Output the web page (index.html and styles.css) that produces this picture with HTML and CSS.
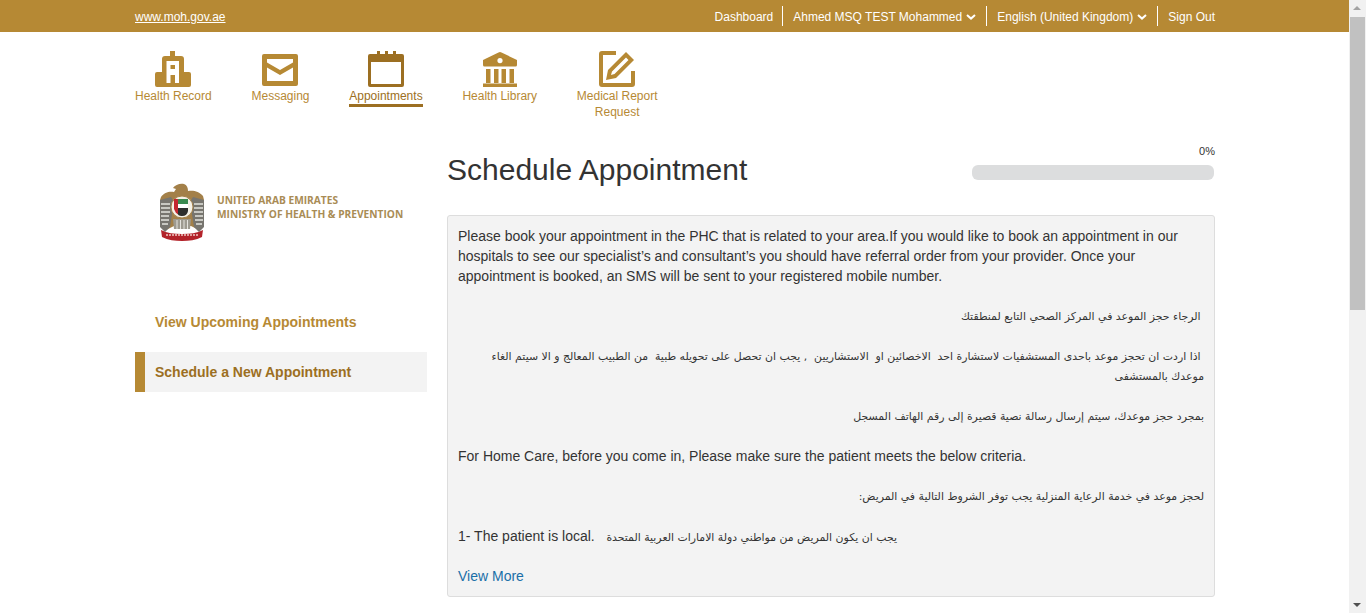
FILE: index.html
```html
<!DOCTYPE html>
<html lang="en">
<head>
<meta charset="utf-8">
<title>Schedule Appointment</title>
<link rel="stylesheet" href="styles.css">
</head>
<body>
<div class="app">
  <div class="page">
    <header class="topbar">
      <div class="wrap topbar-inner">
        <a class="site-link" href="#">www.moh.gov.ae</a>
        <ul class="top-menu">
          <li><a href="#">Dashboard</a></li>
          <li><a href="#">Ahmed MSQ TEST Mohammed<svg class="chev" viewBox="0 0 10 6"><path d="M1 1l4 3.600L9 1" fill="none" stroke="#fff" stroke-width="2"/></svg></a></li>
          <li><a href="#">English (United Kingdom)<svg class="chev" viewBox="0 0 10 6"><path d="M1 1l4 3.600L9 1" fill="none" stroke="#fff" stroke-width="2"/></svg></a></li>
          <li><a href="#">Sign Out</a></li>
        </ul>
      </div>
    </header>

    <nav class="wrap mainnav">
      <a class="nav-item" href="#">
        <svg class="nav-icon" viewBox="0 0 36 36"><path fill-rule="evenodd" fill="#b68934" d="M15 0h5v5h6a3 3 0 0 1 3 3v13h5a2 2 0 0 1 2 2v11a2 2 0 0 1-2 2H2a2 2 0 0 1-2-2V23a2 2 0 0 1 2-2h5V8a3 3 0 0 1 3-3h5zM11.500 10v22H15.500V24h4.500v8h4V10zM15.500 14v4h4.500v-4z"/></svg>
        <span class="nav-label">Health Record</span>
      </a>
      <a class="nav-item" href="#">
        <svg class="nav-icon" viewBox="0 0 36 36"><path fill-rule="evenodd" d="M2 3h32a2 2 0 0 1 2 2v28a2 2 0 0 1-2 2H2a2 2 0 0 1-2-2V5a2 2 0 0 1 2-2zm3 5v3.500l13 7.500 13-7.500V8zm0 8.500V30h26V16.500l-13 7.500z" fill="#b68934"/></svg>
        <span class="nav-label">Messaging</span>
      </a>
      <a class="nav-item active" href="#">
        <svg class="nav-icon" viewBox="0 0 36 36"><path fill-rule="evenodd" d="M9 0h3v3h5V0h3v3h5V0h3v3h6a2 2 0 0 1 2 2v29a2 2 0 0 1-2 2H2a2 2 0 0 1-2-2V5a2 2 0 0 1 2-2h7zM3 11v22h30V11z" fill="#9c6f22"/></svg>
        <span class="nav-label">Appointments</span>
      </a>
      <a class="nav-item" href="#">
        <svg class="nav-icon" viewBox="0 0 36 36"><path fill-rule="evenodd" fill="#b68934" d="M16.500 1.500a3 3 0 0 1 3 0L35 9v5a1.500 1.500 0 0 1-1.500 1.500h-31A1.500 1.500 0 0 1 1 14V9zM18 7a2.600 2.600 0 1 0 0 5.200A2.600 2.600 0 0 0 18 7zM4 18h4.500v14H4zM12 18h4.500v14H12zM19.500 18H24v14h-4.500zM27.500 18H32v14h-4.500zM1 32.500h34V36H1z"/></svg>
        <span class="nav-label">Health Library</span>
      </a>
      <a class="nav-item" href="#">
        <svg class="nav-icon" viewBox="0 0 36 36"><path fill="#b68934" d="M3 0h14v4H4v28h28V20h4v13a3 3 0 0 1-3 3H3a3 3 0 0 1-3-3V3a3 3 0 0 1 3-3z"/><path fill="#b68934" fill-rule="evenodd" d="M27 1l8 8-18 18-10 2 2-10zm0 5.500L13 20.500l-1 3.500 3.500-1L29.500 9z"/></svg>
        <span class="nav-label">Medical Report<br>Request</span>
      </a>
    </nav>

    <main class="wrap content">
      <aside class="sidebar">
        <div class="logo">
          <svg class="emblem" viewBox="0 0 46 60">
            <path d="M2 14C5 9 11 8 15 9l2-3-3-1c2-3 7-5 11-4 3 1 4 4 4 7 5-1 11 0 15 5l1 4v24l-5 6-8-4H15l-8 4-6-5V17z" fill="#a38049"/>
            <path d="M1 17l11-3 3 5-4 25-5 5-5-5zM45 17l-11-3-3 5 4 25 5 5 5-5z" fill="#77756f"/>
            <path d="M2 21h9M2 25h9M2 29h9M2 33h8M2 37h8M3 41h6M35 21h9M35 25h9M35 29h9M36 33h8M36 37h8M37 41h6" stroke="#e4e3de" stroke-width="1.300"/>
            <path d="M14 36h18l-1 10H15z" fill="#9d9a90"/>
            <path d="M18 37v9M21.500 37v9M25 37v9M28.500 37v9" stroke="#e4e3de"/>
            <circle cx="23" cy="24" r="11" fill="#f5f1e7" stroke="#a38049"/>
            <path d="M18 16h11v5H18z" fill="#3a8a4f"/>
            <path d="M18 21h11v4H18z" fill="#fff"/>
            <path d="M18 25h11v3a6 6 0 0 1-6 5 5 5 0 0 1-5-3z" fill="#2e2e2c"/>
            <path d="M15 16h4v15l-2-1-2-4z" fill="#c4272f"/>
            <path d="M2 47c6 3 13 4 21 4s15-1 21-4l-1 7c-6 3-13 4-20 4s-14-1-20-4z" fill="#b3232a"/>
            <path d="M7 52h32" stroke="#efc9c4" stroke-width="1.500" stroke-dasharray="2 1"/>
          </svg>
          <div class="logo-text">UNITED ARAB EMIRATES<br>MINISTRY OF HEALTH &amp; PREVENTION</div>
        </div>
        <a class="side-link" href="#">View Upcoming Appointments</a>
        <a class="side-link current" href="#">Schedule a New Appointment</a>
      </aside>

      <section class="main-col">
        <div class="title-row">
          <h1>Schedule Appointment</h1>
          <div class="progress-box">
            <div class="progress-num">0%</div>
            <div class="progress-bar"></div>
          </div>
        </div>
        <div class="panel">
          <p>Please book your appointment in the PHC that is related to your area.If you would like to book an appointment in our hospitals to see our specialist’s and consultant’s you should have referral order from your provider. Once your appointment is booked, an SMS will be sent to your registered mobile number.</p>
          <p class="ar" dir="rtl">&nbsp;الرجاء حجز الموعد في المركز الصحي التابع لمنطقتك</p>
          <p class="ar" dir="rtl">&nbsp;اذا اردت ان تحجز موعد باحدى المستشفيات لاستشارة احد &nbsp;الاخصائين او &nbsp;الاستشاريين &nbsp;, يجب ان تحصل على تحويله طبية &nbsp;من الطبيب المعالج و الا سيتم الغاء موعدك بالمستشفى</p>
          <p class="ar" dir="rtl">بمجرد حجز موعدك، سيتم إرسال رسالة نصية قصيرة إلى رقم الهاتف المسجل</p>
          <p>For Home Care, before you come in, Please make sure the patient meets the below criteria.</p>
          <p class="ar" dir="rtl">لحجز موعد في خدمة الرعاية المنزلية يجب توفر الشروط التالية في المريض:</p>
          <p class="last">1- The patient is local. &nbsp;&nbsp;<span class="ar">يجب ان يكون المريض من مواطني دولة الامارات العربية المتحدة</span></p>
          <a class="more" href="#">View More</a>
        </div>
      </section>
    </main>
  </div>
  <div class="scrollbar" aria-hidden="true">
    <div class="sb-btn sb-up"></div>
    <div class="sb-thumb"></div>
    <div class="sb-rest"></div>
    <div class="sb-btn sb-down"></div>
  </div>
</div>
</body>
</html>
```
FILE: styles.css
```css
* { box-sizing: border-box; }
html, body { margin: 0; height: 100%; overflow: hidden; background: #fff; }
body { font-family: "Liberation Sans", Arial, sans-serif; color: #333; font-size: 14px; line-height: 20px; }
a { text-decoration: none; }

.app { display: flex; height: 613px; }
.page { flex: 1; min-width: 0; }
.wrap { width: 1080px; margin: 0 0 0 135px; }

.topbar { height: 32px; background: #b68934; }
.topbar-inner { display: flex; justify-content: space-between; align-items: center; height: 32px; }
.site-link { color: #fff; font-size: 12px; text-decoration: underline; padding-top: 1px; }
.top-menu { display: flex; align-items: center; list-style: none; margin: 0; padding: 0; }
.top-menu li { display: flex; align-items: center; height: 20px; padding: 1px 10px 0; border-left: 1px solid #fff; }
.top-menu li:first-child { border-left: 0; padding-right: 9px; }
.top-menu li:last-child { padding-right: 0; }
.top-menu a { color: #fff; font-size: 12px; display: flex; align-items: center; }
.chev { width: 10px; height: 6px; margin-left: 4px; }

.mainnav { display: flex; gap: 39.750px; height: 103px; padding-top: 19px; }
.nav-item { display: flex; flex-direction: column; align-items: center; text-align: center; color: #b68934; font-size: 12px; line-height: 16px; align-self: flex-start; }
.nav-icon { width: 36px; height: 36px; display: block; }
.nav-label { display: block; margin-top: 1px; }
.nav-item.active { color: #9c6f22; border-bottom: 3px solid #9c6f22; padding-bottom: 0; }

.content { display: flex; gap: 20px; }
.sidebar { width: 292px; flex: none; }
.logo { display: flex; align-items: center; height: 60px; margin: 48px 0 0 24px; }
.emblem { width: 46px; height: 60px; flex: none; filter: blur(.4px); }
.logo-text { margin: 0 0 12px 12px; color: #a98c55; font-family: "Open Sans", sans-serif; font-size: 10.200px; font-weight: 700; line-height: 14.500px; white-space: nowrap; }
.side-link { display: block; height: 40px; line-height: 40px; padding-left: 20px; font-size: 14px; font-weight: 700; color: #b68934; }
.logo + .side-link { margin-top: 59px; }
.side-link.current { margin-top: 10px; border-left: 10px solid #b68934; padding-left: 10px; background: #f3f3f3; color: #9c6f22; }

.main-col { flex: 1; min-width: 0; }
.title-row { display: flex; justify-content: space-between; height: 80px; }
h1 { margin: 15px 0 0; font-size: 30px; font-weight: 400; line-height: 40px; color: #333; }
.progress-box { width: 243px; padding-top: 9px; }
.progress-num { font-size: 11px; line-height: 14px; text-align: right; color: #333; }
.progress-bar { height: 15px; width: 242px; margin-top: 7px; border-radius: 6px; background: #dcddde; }
.panel { height: 382px; padding: 10px; background: #f3f3f3; border: 1px solid #ddd; border-radius: 3px; overflow: hidden; }
.panel p { margin: 0 0 20px; }
.panel p.ar { padding-top: 1px; margin-bottom: 19px; }
.panel p.last { margin-bottom: 18px; }
.ar { font-family: "DejaVu Sans", "Liberation Sans", sans-serif; font-size: 10.900px; }
.more { color: #1a6fa8; }

.scrollbar { width: 17px; flex: none; display: flex; flex-direction: column; background: #f1f1f1; }
.sb-btn { height: 17px; flex: none; position: relative; }
.sb-up::after, .sb-down::after { content: ""; position: absolute; left: 4px; border-left: 4px solid transparent; border-right: 4px solid transparent; }
.sb-up::after { top: 6px; border-bottom: 4px solid #a3a3a3; }
.sb-down::after { bottom: 6px; border-top: 4px solid #505050; }
.sb-thumb { height: 293px; margin: 0 1px; background: #c1c1c1; flex: none; }
.sb-rest { flex: 1; }
```
